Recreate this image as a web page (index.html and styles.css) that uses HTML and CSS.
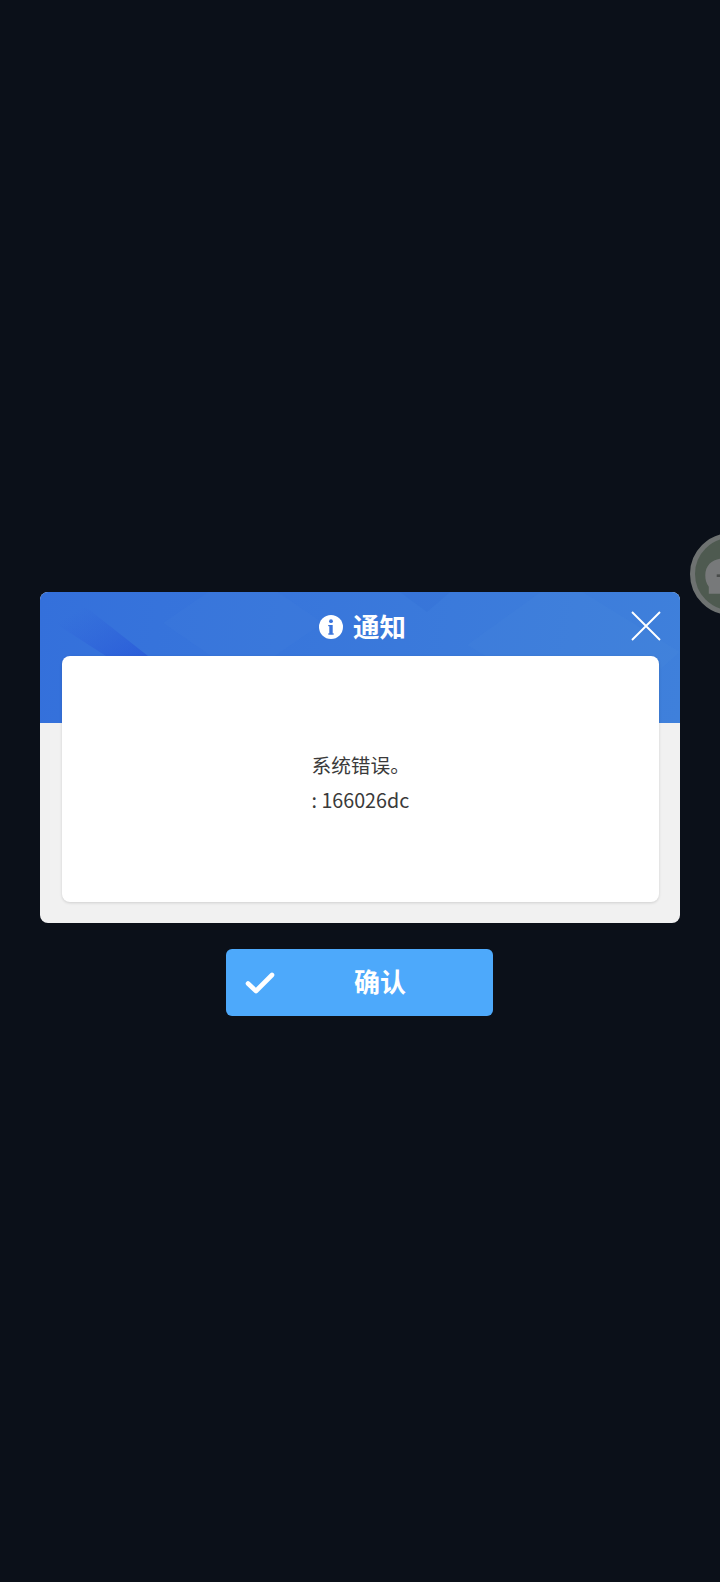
FILE: index.html
```html
<!DOCTYPE html>
<html lang="zh">
<head>
<meta charset="UTF-8"/>
<title>通知</title>
<link rel="stylesheet" href="styles.css">
</head>
<body>
<div class="floatClip">
	<div class="floatBall">
		<svg class="floatHead" viewBox="0 0 40 50"><path d="M5 44v-8c-3-4-4-8-4-13C1 11 10 4 21 4s19 7 19 19v21z" fill="#77797a"/><rect x="14" y="22" width="6" height="3" fill="#4a4d4c"/></svg>
	</div>
</div>
<div class="dialog">
	<div class="card">
		<div class="cardHead">
			<svg class="shade" viewBox="0 0 640 131" preserveAspectRatio="none">
				<defs>
					<linearGradient id="streak" x1="0" y1="0" x2="1" y2="1">
						<stop offset="0.25" stop-color="#2a56d8" stop-opacity="0"/>
						<stop offset="1" stop-color="#2450d8" stop-opacity="0.6"/>
					</linearGradient>
				</defs>
				<polygon points="33,5 108,64 66,64 10,28" fill="url(#streak)"/>
				<polygon points="123,31 203,-24 283,31 203,86" fill="#4a88e0" opacity="0.1"/>
				<polygon points="360,0 410,0 387,20" fill="#2f68d2" opacity="0.2"/>
				<polygon points="427,53 520,-14 640,60 560,131" fill="#5a9ae6" opacity="0.08"/>
			</svg>
			<div class="title">
				<svg class="infoIcon" viewBox="0 0 24 24"><circle cx="12" cy="12" r="12" fill="#fff"/><circle cx="12" cy="6.2" r="1.9" fill="#3a74dc"/><rect x="10.3" y="10" width="3.4" height="9.4" fill="#3a74dc"/><rect x="9.2" y="10" width="3" height="1.2" fill="#3a74dc"/><rect x="9.2" y="18.4" width="5.6" height="1.2" fill="#3a74dc"/></svg>
				<span>通知</span>
			</div>
			<svg class="closeIcon" viewBox="0 0 30 30"><path d="M1 1l28 28M29 1L1 29" stroke="#fff" stroke-width="1.9" fill="none"/></svg>
		</div>
		<div class="message">
			<p>系统错误。</p>
			<p>: 166026dc</p>
		</div>
	</div>
	<div class="okButton">
		<svg class="checkIcon" viewBox="0 0 30 24"><path d="M3 12.5l8 7.5L27 4" stroke="#fff" stroke-width="4.6" stroke-linecap="round" stroke-linejoin="round" fill="none"/></svg>
		<span>确认</span>
	</div>
</div>
</body>
</html>
```

FILE: styles.css
```css
html, body { margin: 0; height: 100%; }
body {
	background: #0b1019;
	font-family: 'Noto Sans CJK SC', 'Noto Sans', sans-serif;
	overflow: hidden;
	position: relative;
}
.dialog { padding: 592px 40px 0; display: flex; flex-direction: column; align-items: center; }
.card {
	width: 640px; height: 331px; box-sizing: border-box;
	background: #f1f1f1; border-radius: 8px;
	position: relative; padding: 64px 21px 20px 22px;
}
.cardHead {
	position: absolute; left: 0; top: 0; right: 0; height: 131px;
	border-radius: 8px 8px 0 0; overflow: hidden;
	background: linear-gradient(100deg, #3470db, #3f80db);
}
.shade { position: absolute; left: 0; top: 0; width: 100%; height: 100%; }
.title {
	position: relative; height: 68px; display: flex; align-items: center; justify-content: center; gap: 10px;
	color: #fff; font-size: 26.5px; font-weight: 700; line-height: 1;
	padding-left: 5px;
}
.infoIcon { width: 24px; height: 24px; margin-top: 1px; }
.closeIcon { position: absolute; right: 19px; top: 19px; width: 30px; height: 30px; }
.message {
	position: relative; height: 246px; background: #fff; border-radius: 8px;
	box-shadow: 0 1px 3px rgba(0,0,0,0.14);
	display: flex; flex-direction: column; align-items: center; justify-content: center;
	color: #3a3a3a; font-size: 19.7px; line-height: 35px;
	padding-top: 5px; box-sizing: border-box;
}
.message p { margin: 0; width: 98px; white-space: nowrap; }
.okButton {
	width: 267px; height: 67px; margin-top: 26px; margin-left: -1px; box-sizing: border-box;
	background: #4da9fb; border-radius: 6px;
	display: flex; align-items: center; position: relative;
	color: #fff; font-size: 26px; font-weight: 700;
}
.okButton span { position: absolute; left: 128px; top: 11px; line-height: 42px; }
.checkIcon { width: 30px; height: 24px; margin-left: 19px; }
.floatClip { position: absolute; right: 0; top: 533px; width: 30px; height: 82px; overflow: hidden; }
.floatBall {
	width: 82px; height: 82px; box-sizing: border-box;
	border-radius: 50%; background: #4e5a50; border: 5px solid #6e7271; position: relative;
}
.floatHead { position: absolute; left: 9px; top: 17px; width: 36px; height: 44px; }
```
